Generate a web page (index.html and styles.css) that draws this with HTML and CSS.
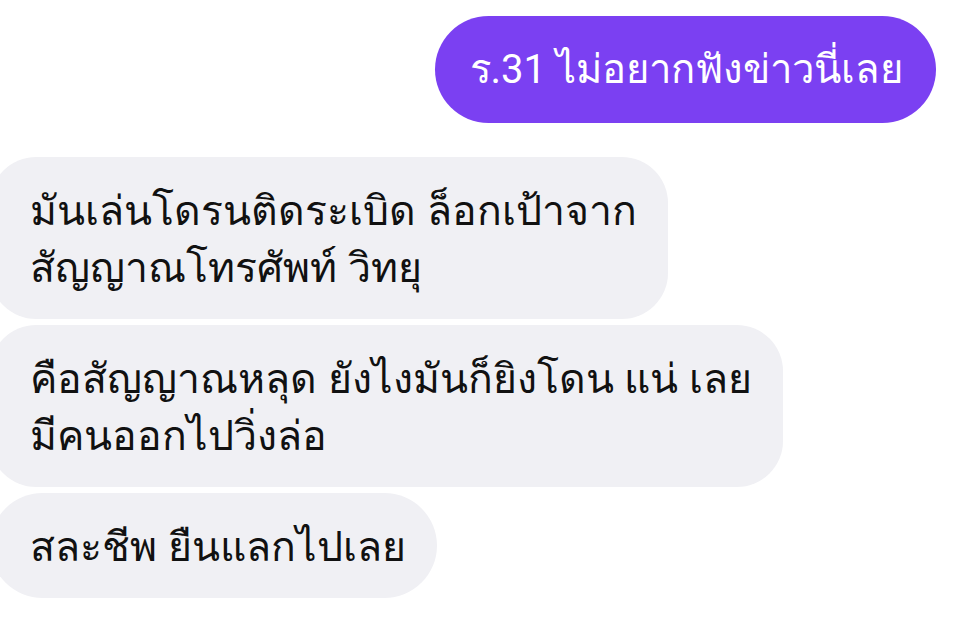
FILE: index.html
```html
<!DOCTYPE html>
<html lang="th">
<head>
<meta charset="utf-8">
<link rel="stylesheet" href="styles.css">
</head>
<body>
<div class="chat">
  <div class="msg msg-out">ร.31 ไม่อยากฟังข่าวนี่เลย</div>
  <div class="group-in">
    <div class="msg msg-in">มันเล่นโดรนติดระเบิด ล็อกเป้าจาก<br>สัญญาณโทรศัพท์ วิทยุ</div>
    <div class="msg msg-in">คือสัญญาณหลุด ยังไงมันก็ยิงโดน แน่ เลย<br>มีคนออกไปวิ่งล่อ</div>
    <div class="msg msg-in">สละชีพ ยืนแลกไปเลย</div>
  </div>
</div>
</body>
</html>
```
FILE: styles.css
```css
html, body {
  margin: 0;
  padding: 0;
  background: #ffffff;
}
.chat {
  width: 960px;
  height: 624px;
  overflow: hidden;
  display: flex;
  flex-direction: column;
  padding-top: 16px;
  box-sizing: border-box;
}
.msg {
  box-sizing: border-box;
  white-space: nowrap;
}
.msg-out {
  align-self: flex-end;
  margin-right: 24px;
  background: #7b40f2;
  color: #ffffff;
  font-family: Roboto, "Noto Sans", sans-serif;
  font-size: 40px;
  line-height: 57px;
  padding: 25px 33px 25px 35px;
  border-radius: 54px;
}
.group-in {
  margin-top: 34px;
  display: flex;
  flex-direction: column;
  align-items: flex-start;
  gap: 6px;
}
.msg-in {
  margin-left: -10px;
  background: #f0f0f4;
  color: #111111;
  font-family: "Noto Sans", "DejaVu Sans", sans-serif;
  font-size: 41px;
  line-height: 57px;
  padding: 24px 31px 24px 40px;
  border-radius: 46px;
}
.msg-in:last-child {
  border-radius: 53px;
}
```
